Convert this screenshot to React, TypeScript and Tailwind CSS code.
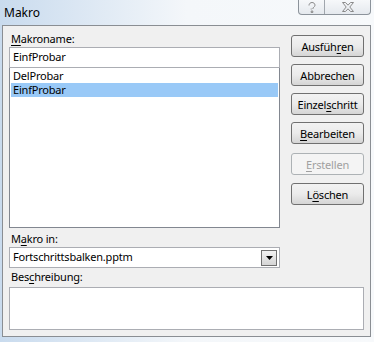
import React from 'react';

const font = { fontFamily: '"Noto Sans", "Open Sans", sans-serif' };

function U({ children }: { children: React.ReactNode }) {
  return <span className="underline underline-offset-2">{children}</span>;
}

function Btn({ children, disabled }: { children: React.ReactNode; disabled?: boolean }) {
  return (
    <div
      className={`h-[22px] w-[73px] flex items-center justify-center rounded-[3px] border text-[11px] leading-none ${
        disabled
          ? 'border-[#adb2b5] bg-[#f4f4f4] text-[#a0a0a0]'
          : 'border-[#707070] bg-gradient-to-b from-[#f2f2f2] via-[#ebebeb] to-[#d5d5d5] text-black'
      }`}
    >
      {children}
    </div>
  );
}

export default function App() {
  return (
    <div
      className="relative w-[374px] h-[342px] overflow-hidden bg-gradient-to-r from-[#c9dbee] via-[#f4f7fa] to-[#f7f9fb]"
      style={font}
    >
      {/* title bar */}
      <div className="h-[25px] flex items-start">
        <span className="pl-[4px] pt-[4px] text-[12px] text-black">Makro</span>
      </div>
      <div className="absolute top-0 right-[3px] flex h-[15px] rounded-b-[4px] border border-t-0 border-[#8c939b] bg-gradient-to-b from-[#f6f8fa] to-[#e5e9ee]">
        <div className="w-[26px] flex items-center justify-center border-r border-[#a0a6ad]">
          <svg width="8" height="11" viewBox="0 0 8 11" fill="none" stroke="#8a8a8a" strokeWidth="1">
            <path d="M1 3.5C1 1.5 2.5 0.5 4 0.5S7 1.5 7 3.2C7 5 4.8 5 4.8 7" />
            <path d="M3.2 7.5V6.5M3.2 9h1.6v1.5H3.2z" />
          </svg>
        </div>
        <div className="w-[45px] flex items-center justify-center">
          <svg width="12" height="10" viewBox="0 0 12 10" fill="none" stroke="#8a8a8a" strokeWidth="1">
            <path d="M0.5 0.5h3L6 3.2 8.5 0.5h3L7.8 5l3.7 4.5h-3L6 6.8 3.5 9.5h-3L4.2 5z" />
          </svg>
        </div>
      </div>

      {/* body */}
      <div className="mx-[2px] w-[369px] h-[312px] border border-[#8a8e93] bg-[#f0f0f0] px-[6px] pt-[6px] text-[11px] tracking-[-0.2px] text-black">
        <div className="flex gap-[11px]">
          <div className="w-[271px] flex flex-col">
            <div className="h-[14px] leading-[14px] pl-[2px]">
              <U>M</U>akroname:
            </div>
            <div className="mt-[1px] h-[21px] border border-[#abadb3] bg-white pl-[3px] flex items-center">
              EinfProbar
            </div>
            <div className="h-[160px] border border-t-0 border-[#828790] bg-white pt-[1px] px-[1px] leading-[14px]">
              <div className="pl-[2px]">DelProbar</div>
              <div className="pl-[2px] bg-[#99c9f7]">EinfProbar</div>
            </div>
            <div className="mt-[4px] h-[14px] leading-[14px] pl-[2px]">
              M<U>a</U>kro in:
            </div>
            <div className="mt-[1px] h-[21px] border border-[#abadb3] bg-white pl-[3px] flex items-center justify-between pr-[2px]">
              <span>Fortschrittsbalken.pptm</span>
              <div className="w-[16px] h-[16px] border border-[#707070] bg-gradient-to-b from-[#f2f2f2] to-[#d5d5d5] flex items-center justify-center">
                <svg width="7" height="4" viewBox="0 0 7 4"><path d="M0 0h7L3.5 4z" fill="#000" /></svg>
              </div>
            </div>
            <div className="mt-[2px] h-[14px] leading-[14px] pl-[2px]">
              Bes<U>c</U>hreibung:
            </div>
          </div>
          <div className="flex flex-col gap-[7px] pt-[3px]">
            <Btn>Ausfüh<U>r</U>en</Btn>
            <Btn>Abbrechen</Btn>
            <Btn>Einzel<U>s</U>chritt</Btn>
            <Btn><U>B</U>earbeiten</Btn>
            <div className="mt-[2px]"><Btn disabled><U>E</U>rstellen</Btn></div>
            <div className="mt-[1px]"><Btn>L<U>ö</U>schen</Btn></div>
          </div>
        </div>
        <div className="mt-[3px] w-[355px] h-[43px] border border-[#abadb3] bg-white" />
      </div>
    </div>
  );
}
